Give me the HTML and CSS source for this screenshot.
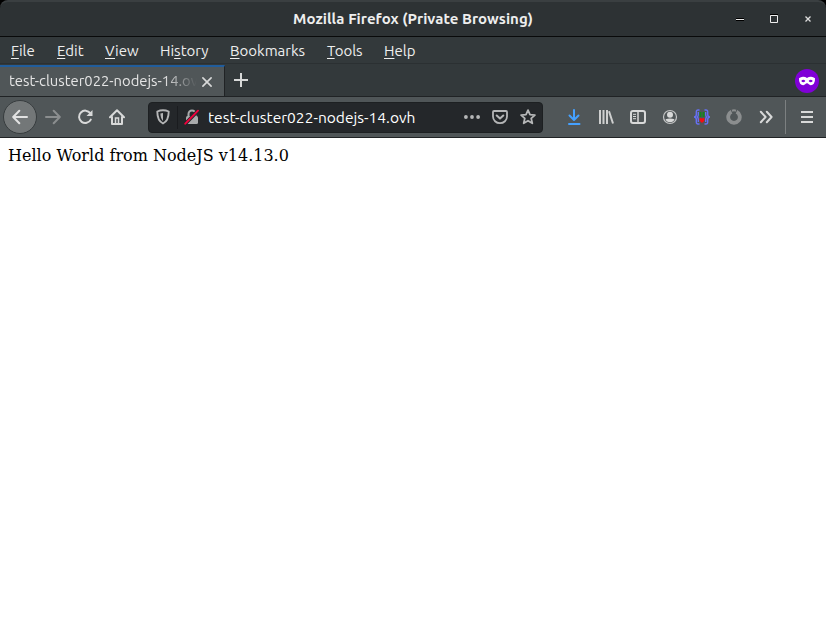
FILE: index.html
```html
<!DOCTYPE html>
<html lang="en">
<head>
<meta charset="utf-8">
<title>Mozilla Firefox (Private Browsing)</title>
<link rel="stylesheet" href="styles.css">
</head>
<body>
<div class="window">
  <header class="titlebar">
    <span class="title">Mozilla Firefox (Private Browsing)</span>
    <div class="controls">
      <svg viewBox="0 0 16 16"><path d="M4 8.500h8" stroke="#000" stroke-width="3"/><path d="M4 8.500h8" stroke="#eee"/></svg>
      <svg viewBox="0 0 16 16"><path d="M4 3.500h8M5 11.500h6" stroke="#000"/><path d="M4.500 4.500h7v7h-7z" fill="none" stroke="#eee"/></svg>
      <svg viewBox="0 0 16 16"><path d="M5.500 5.500l5 5m0-5l-5 5" stroke="#ddd" stroke-width="1.300"/></svg>
    </div>
  </header>
  <nav class="menu">
    <span class="m-file"><u>F</u>ile</span><span class="m-edit"><u>E</u>dit</span><span class="m-view"><u>V</u>iew</span><span class="m-history">Hi<u>s</u>tory</span><span class="m-bookmarks"><u>B</u>ookmarks</span><span class="m-tools"><u>T</u>ools</span><span class="m-help"><u>H</u>elp</span>
  </nav>
  <div class="tabs">
    <div class="tab">
      <span class="label">test-cluster022-nodejs-14.ovh</span>
      <svg class="close" viewBox="0 0 16 16"><path d="M3.300 3.300l9.400 9.400m0-9.400l-9.400 9.400" stroke="#d8d9d9" stroke-width="1.900" stroke-linecap="round"/></svg>
    </div>
    <svg class="plus" viewBox="0 0 16 16"><path d="M8 1v14M1 8h14" stroke="#d8d9d9" stroke-width="2"/></svg>
    <svg class="mask" viewBox="0 0 24 24"><circle cx="12" cy="12" r="12" fill="#8000d7"/><path fill="#fff" fill-rule="evenodd" d="M4 9.200Q6 7.500 8.300 7.700Q10.300 7.800 12 9Q13.700 7.800 15.700 7.700Q18 7.500 20 9.200Q20.300 12.500 18.800 14.800Q17.500 16.300 15.700 16.200C14 16 13.500 14.300 12 14.300S10 16 8.300 16.200Q6.500 16.300 5.200 14.800Q3.700 12.500 4 9.200ZM6.200 12Q8.300 9.500 10.400 12Q8.300 14.500 6.200 12ZM13.600 12Q15.700 9.500 17.800 12Q15.700 14.500 13.600 12Z"/></svg>
  </div>
  <div class="toolbar">
    <span class="back"><svg viewBox="0 0 16 16"><path d="M15 8H1.500M7.300 1.800L1.200 8l6.100 6.200" fill="none" stroke="#e2e2e2" stroke-width="2" stroke-linecap="round" stroke-linejoin="round"/></svg></span>
    <svg class="forward" viewBox="0 0 16 16"><path d="M1 8h13.500M8.700 1.800L14.800 8l-6.100 6.200" fill="none" stroke="#8b8e8f" stroke-width="2" stroke-linecap="round" stroke-linejoin="round"/></svg>
    <svg class="reload" viewBox="0 0 16 16"><path d="M13.300 4.200A6.200 6.200 0 1 0 13.800 10.600" fill="none" stroke="#d8d9d9" stroke-width="2" stroke-linecap="round"/><path d="M15.500 1v6H9.500z" fill="#d8d9d9"/></svg>
    <svg class="home" viewBox="0 0 16 16"><path d="M1 8.300L8 1.300l7 7M3 8v7h10V8" fill="none" stroke="#d8d9d9" stroke-width="2" stroke-linecap="round" stroke-linejoin="round"/><path d="M6.500 15V9h3v6" fill="none" stroke="#d8d9d9" stroke-width="1.500"/></svg>
    <div class="urlbar">
      <svg class="shield" viewBox="0 0 16 16"><path d="M8 1.300c2.200 0 4.100.5 5.700 1.200 0 5.400-.9 9.700-5.700 12C3.200 12.200 2.300 7.900 2.300 2.500 3.900 1.800 5.800 1.300 8 1.300z" fill="none" stroke="#b5b6b7" stroke-width="1.900" stroke-linejoin="round"/><path d="M8 4v7.900C6 10 5.500 7.500 5.400 4.600Q6.700 4 8 4z" fill="#b5b6b7"/></svg>
      <i class="divider"></i>
      <svg class="lock" viewBox="0 0 16 16"><path d="M4.500 8V5a3.500 3.500 0 0 1 7 0v3" fill="none" stroke="#a9abac" stroke-width="2"/><rect x="2" y="7" width="12" height="8" rx="1.500" fill="#a9abac"/><path d="M1.300 14.700L14 1.700" stroke="#24272a" stroke-width="3.600"/><path d="M1.300 14.700L14 1.700" stroke="#f4003d" stroke-width="1.900" stroke-linecap="round"/></svg>
      <span class="address">test-cluster022-nodejs-14.ovh</span>
      <div class="actions">
        <svg viewBox="0 0 16 16" fill="#b5b6b7"><circle cx="1.900" cy="8" r="1.900"/><circle cx="8" cy="8" r="1.900"/><circle cx="14.100" cy="8" r="1.900"/></svg>
        <svg viewBox="0 0 16 16" fill="none" stroke="#b5b6b7" stroke-linecap="round" stroke-linejoin="round"><path d="M2 2h12q1 0 1 1v4.500a7 6.700 0 0 1-14 0V3q0-1 1-1z" stroke-width="1.800"/><path d="M4.700 6.500L8 9.600l3.300-3.100" stroke-width="2"/></svg>
        <svg viewBox="0 0 16 16"><path d="M8 1.100l2 4.500 4.900.5-3.700 3.300 1.100 4.900L8 11.700l-4.300 2.600 1.100-4.900L1.100 6.100 6 5.600z" fill="none" stroke="#b5b6b7" stroke-width="1.800" stroke-linejoin="round"/></svg>
      </div>
    </div>
    <div class="tools">
      <svg viewBox="0 0 16 16"><path d="M8 1v9.500M3.500 6.500L8 11l4.500-4.500M3 15h10.500" fill="none" stroke="#45a1ff" stroke-width="2" stroke-linecap="round" stroke-linejoin="round"/></svg>
      <svg viewBox="0 0 16 16"><path d="M2 1v14M5.500 1v14M9 1v14M11 2.300l4 12.200" stroke="#cecfcf" stroke-width="2"/></svg>
      <svg viewBox="0 0 16 16"><rect x="1" y="2" width="14" height="12" rx="2" fill="none" stroke="#d8d9d9" stroke-width="2"/><path d="M8 2v12" stroke="#d8d9d9" stroke-width="1.500"/><path d="M3 5.300h3M3 7.500h3M3 9.700h3" stroke="#d8d9d9"/></svg>
      <svg viewBox="0 0 16 16"><circle cx="8" cy="8" r="6.500" fill="none" stroke="#c4c5c6" stroke-width="1.200"/><circle cx="8" cy="5.800" r="3" fill="#d8d9d9"/><path d="M3.500 10.200q4.500-1.600 9 0Q11.500 13 8 13.200 4.500 13 3.500 10.200z" fill="#d8d9d9"/></svg>
      <svg viewBox="0 0 16 16"><path d="M5.500 1H4Q2.300 1 2.300 3v2.500Q2.300 8 0 8q2.300 0 2.300 2.500V13q0 2 1.700 2h1.500M10.500 1H12q1.700 0 1.700 2v2.500Q13.700 8 16 8q-2.300 0-2.300 2.500V13q0 2-1.700 2h-1.500M4.300 3v2.500Q4.300 7 3.500 8q.8 1 .8 2.500V13M11.700 3v2.500q0 1.500.8 2.500-.8 1-.8 2.500V13" fill="none" stroke="#6670f2" stroke-width="1.400"/><path d="M6.500 3v5M9.500 3v5" stroke="#15851e" stroke-width="2"/><path d="M5.300 10q1.200-1.800 2.700-.3 1.500-1.500 2.700.3Q11 12 8 14 5 12 5.300 10z" fill="#f50c12"/></svg>
      <svg viewBox="0 0 16 16"><path d="M5.500 2.800a5.800 5.800 0 1 0 5 0" fill="none" stroke="#8b8e8f" stroke-width="3.800"/><path d="M6 1.700Q8 1 10 1.700" fill="none" stroke="#8b8e8f" stroke-width="2"/></svg>
      <svg viewBox="0 0 16 16"><path d="M2.800 2.800L7.600 8l-4.800 5.200M8.800 2.800L13.600 8l-4.800 5.200" fill="none" stroke="#d8d9d9" stroke-width="2" stroke-linecap="round" stroke-linejoin="round"/></svg>
    </div>
    <i class="separator"></i>
    <svg class="hamburger" viewBox="0 0 16 16"><path d="M2 3h12M2 8h12M2 13h12" stroke="#d8d9d9" stroke-width="2"/></svg>
  </div>
</div>
<main class="page">Hello World from NodeJS v14.13.0</main>
</body>
</html>
```
FILE: styles.css
```css
* { box-sizing: border-box; }
body { margin: 0; height: 644px; overflow: hidden; background: #fff; }
svg { display: block; width: 16px; height: 16px; flex: none; }
.window { background: #000; font: 15px/20px "Ubuntu", "Noto Sans", sans-serif; color: #eee; white-space: nowrap; }
.titlebar { display: grid; grid-template-columns: 1fr 242px 1fr; align-items: center; height: 37px; background: #2d3234; border-top: 2px solid #3a3f41; border-bottom: 1px solid #090a0a; border-radius: 8px 8px 0 0; }
.title { grid-column: 2; font-weight: 700; letter-spacing: .04px; text-align: center; }
.controls { display: flex; justify-content: flex-end; gap: 18px; padding-right: 10px; }
.menu { display: flex; height: 27px; padding: 4px 0 0 11px; background: #33393b; border-bottom: 1px solid #2b3032; }
.menu u { text-underline-offset: 2px; text-decoration-thickness: 1px; text-decoration-skip-ink: none; }
.m-file { width: 46px; }
.m-edit { width: 48px; }
.m-view { width: 55px; }
.m-history { width: 70px; }
.m-bookmarks { width: 97px; }
.m-tools { width: 57px; }
.tabs { display: flex; align-items: center; height: 33px; background: #33393b; border-bottom: 1px solid #202325; }
.tab { display: flex; align-items: center; width: 225px; height: 31px; padding: 0 10px 0 9px; background: #505658; border-top: 2px solid #215d9c; border-right: 1px solid #202325; align-self: flex-start; margin-top: 1px; }
.label { width: 188px; margin: 0 3px 2px 0; overflow: hidden; color: #e5e5e5; font-size: 14.8px; -webkit-mask-image: linear-gradient(to right, #000 155px, transparent 188px); mask-image: linear-gradient(to right, #000 155px, transparent 188px); }
.close { width: 14px; height: 14px; }
.plus { margin-left: 8px; }
.mask { width: 24px; height: 24px; margin: 1px 7px 0 auto; }
.toolbar { display: flex; align-items: center; height: 41px; padding-left: 3px; background: #505658; border-bottom: 1px solid #202325; }
.back { display: grid; place-items: center; width: 34px; height: 34px; background: #737778; border: 1px solid #373c3e; border-radius: 50%; }
.forward { margin-left: 8px; }
.reload, .home { margin-left: 16px; }
.urlbar { display: flex; align-items: center; width: 395px; height: 31px; margin-left: 23px; padding: 0 6px; background: #24272a; border: 1px solid #1d2022; border-radius: 4px; }
.shield { width: 16px; height: 16px; }
.divider { width: 1px; height: 23px; margin: 0 6px 0 6px; background: #1a1c1f; }
.address { margin: 2px 0 0 8px; color: #fff; font-size: 15.55px; }
.actions { display: flex; gap: 12px; margin-left: auto; }
.tools { display: flex; gap: 16px; margin-left: 23px; }
.separator { width: 1px; height: 34px; margin-left: 11px; background: #7c8081; }
.hamburger { margin-left: 13px; }
.page { padding: 8px; font: 16px/19px "DejaVu Serif", serif; color: #000; }
```
